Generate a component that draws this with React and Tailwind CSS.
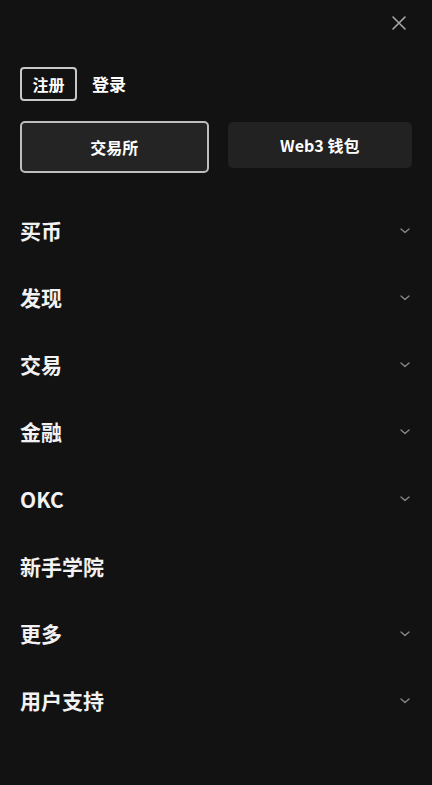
import React from 'react';

const menu = [
  { label: '买币', arrow: true },
  { label: '发现', arrow: true },
  { label: '交易', arrow: true },
  { label: '金融', arrow: true },
  { label: 'OKC', arrow: true },
  { label: '新手学院', arrow: false },
  { label: '更多', arrow: true },
  { label: '用户支持', arrow: true },
];

function Chevron() {
  return (
    <svg width="10" height="6" viewBox="0 0 10 6" fill="none" className="text-[#8a8a8a]">
      <path d="M1 1l4 3.5L9 1" stroke="currentColor" strokeWidth="1.3" strokeLinecap="round" strokeLinejoin="round" />
    </svg>
  );
}

export default function App() {
  return (
    <div
      className="min-h-[785px] w-full bg-[#121212] text-white px-5"
      style={{ fontFamily: '"Noto Sans CJK SC", "Noto Sans", sans-serif' }}
    >
      <div className="flex justify-end pt-[15px] pr-[5px]">
        <svg width="16" height="16" viewBox="0 0 16 16" fill="none" className="text-[#a8a8a8]">
          <path d="M2 2l12 12M14 2L2 14" stroke="currentColor" strokeWidth="1.6" strokeLinecap="round" />
        </svg>
      </div>

      <div className="mt-9 flex items-center gap-[15px]">
        <button className="h-[34px] w-[57px] rounded-[4px] border-2 border-[#c8c8c8] text-[16px] font-semibold leading-none">
          注册
        </button>
        <span className="text-[17px] font-semibold">登录</span>
      </div>

      <div className="mt-5 flex items-start gap-[19px]">
        <button className="h-[52px] flex-1 rounded-[5px] border-2 border-[#bdbdbd] bg-[#242424] text-[16px] font-bold">
          交易所
        </button>
        <button className="mt-px h-[46px] flex-1 rounded-[5px] bg-[#222222] text-[16px] font-bold">
          Web3 钱包
        </button>
      </div>

      <ul className="mt-[24px]">
        {menu.map((m) => (
          <li key={m.label} className="flex h-[67.2px] items-center justify-between pr-[2px]">
            <span className="text-[21px] font-semibold text-[#f2f2f2]">{m.label}</span>
            {m.arrow && <Chevron />}
          </li>
        ))}
      </ul>
    </div>
  );
}
